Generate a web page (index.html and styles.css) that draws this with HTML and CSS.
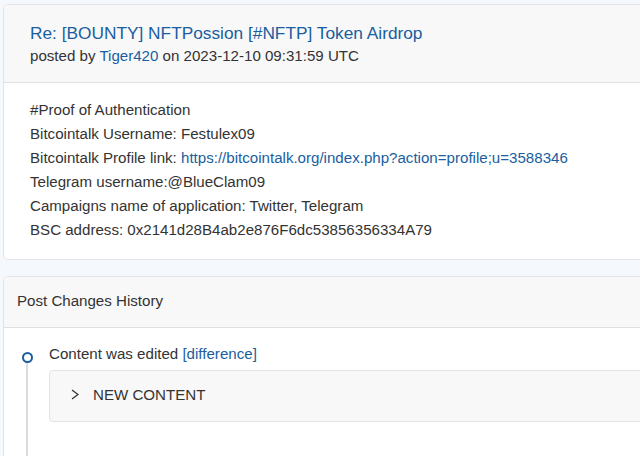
FILE: index.html
```html
<!DOCTYPE html>
<html lang="en">
<head>
  <meta charset="UTF-8">
  <meta name="viewport" content="width=device-width, initial-scale=1.0">
  <title>Re: [BOUNTY] NFTPossion [#NFTP] Token Airdrop</title>
  <link rel="stylesheet" href="styles.css">
</head>
<body>
  <div class="container">
    <div class="card">
      <div class="card-header post-header">
        <h1 class="post-title"><a href="#">Re: [BOUNTY] NFTPossion [#NFTP] Token Airdrop</a></h1>
        <div class="post-meta">posted by <a href="#">Tiger420</a> on 2023-12-10 09:31:59 UTC</div>
      </div>
      <div class="post-body">
        <p>#Proof of Authentication</p>
        <p>Bitcointalk Username: Festulex09</p>
        <p>Bitcointalk Profile link: <a href="#">https://bitcointalk.org/index.php?action=profile;u=3588346</a></p>
        <p>Telegram username:@BlueClam09</p>
        <p>Campaigns name of application: Twitter, Telegram</p>
        <p>BSC address: 0x2141d28B4ab2e876F6dc53856356334A79</p>
      </div>
    </div>

    <div class="card history">
      <div class="card-header history-header">Post Changes History</div>
      <div class="history-body">
        <div class="timeline">
          <div class="timeline-item">
            <span class="dot"></span>
            <div class="event">Content was edited <a href="#">[difference]</a></div>
            <div class="change-box">
              <svg class="chevron" width="8" height="11" viewBox="0 0 8 11">
                <polyline points="1,1 7,5.5 1,10" fill="none" stroke="#333" stroke-width="1.3"/>
              </svg>
              <span class="change-label">NEW CONTENT</span>
            </div>
          </div>
        </div>
      </div>
    </div>
  </div>
</body>
</html>
```

FILE: styles.css
```css
body {
  margin: 0;
  padding: 0;
  background-color: #f5f8fc;
  font-family: "Liberation Sans", Arial, sans-serif;
  font-size: 15.1px;
  color: #333;
  overflow: hidden;
}

a {
  color: #1a5ea0;
  text-decoration: none;
}

.container {
  width: 700px;
  padding: 4px 0 0 3px;
}

.card {
  background-color: #fff;
  border: 1px solid #e3e3e3;
  border-radius: 5px;
}

.card-header {
  background-color: #f8f8f8;
  border-bottom: 1px solid #e0e0e0;
  border-radius: 5px 5px 0 0;
}

.post-header {
  height: 78px;
  padding: 16px 26px 0;
  box-sizing: border-box;
}

.post-title {
  margin: 0;
  font-size: 17.3px;
  font-weight: normal;
  line-height: 24px;
}

.post-meta {
  line-height: 21px;
}

.post-body {
  padding: 15px 26px 17px;
}

.post-body p {
  margin: 0;
  line-height: 24px;
}

.history {
  margin-top: 16px;
  height: 200px;
}

.history-header {
  padding: 12px 13px 14px;
  line-height: 24px;
}

.history-body {
  padding: 14px 0 0 0;
}

.timeline {
  position: relative;
  padding-left: 45px;
  padding-bottom: 30px;
}

.timeline::before {
  content: "";
  position: absolute;
  left: 22px;
  top: 20px;
  width: 2px;
  height: 94px;
  background-color: #dcdcdc;
}

.dot {
  position: absolute;
  left: 18px;
  top: 10px;
  width: 7px;
  height: 7px;
  border: 2px solid #1a5ea0;
  border-radius: 50%;
  background-color: #fff;
}

.event {
  line-height: 24px;
}

.change-box {
  margin-top: 4px;
  height: 52px;
  box-sizing: border-box;
  background-color: #f8f8f8;
  border: 1px solid #e3e3e3;
  border-radius: 4px;
  display: flex;
  align-items: center;
  padding: 0 0 4px 21px;
}

.chevron {
  margin-right: 14px;
}
```
